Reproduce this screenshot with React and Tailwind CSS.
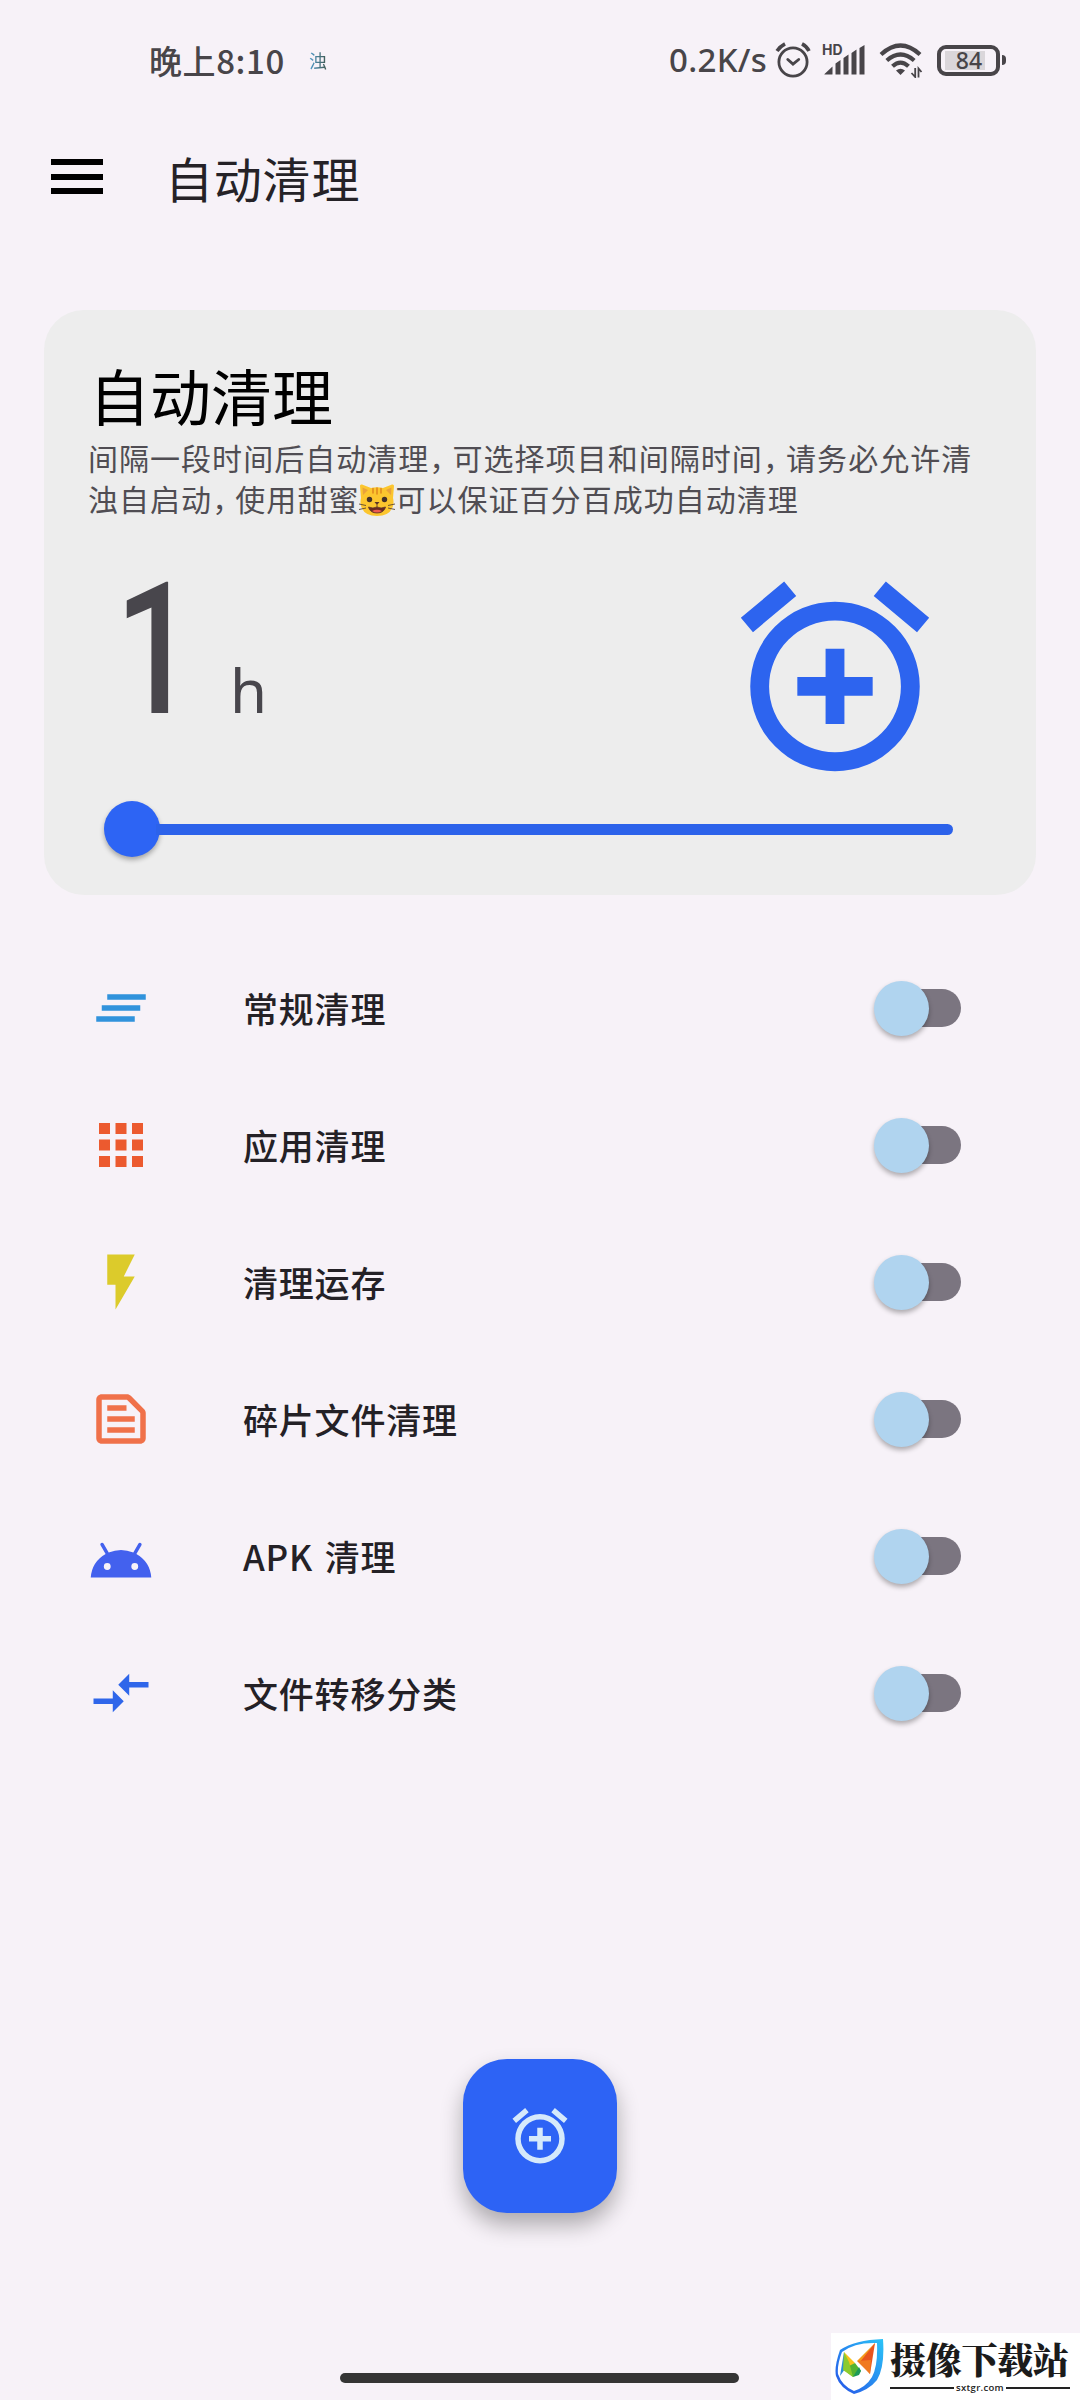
import { useState } from 'react';
import {
  MdAndroid, MdApps, MdClearAll, MdCompareArrows, MdFlashOn, MdOutlineTextSnippet
} from 'react-icons/md';

// 清理项目列表
const items = [
  { name: '常规清理', icon: MdClearAll, color: 'text-[#3193dc]' },
  { name: '应用清理', icon: MdApps, color: 'text-[#ec5a2f]' },
  { name: '清理运存', icon: MdFlashOn, color: 'text-[#dccb2b]' },
  { name: '碎片文件清理', icon: MdOutlineTextSnippet, color: 'text-[#f0714a]' },
  { name: 'APK 清理', icon: MdAndroid, color: 'text-[#4361ee] mt-[10px]' },
  { name: '文件转移分类', icon: MdCompareArrows, color: 'text-[#2f66ea]' }
];

const AlarmAdd = ({ className }) => (
  <svg viewBox="0 0 24 24" fill="currentColor" className={className}>
    <path d="M7.88 3.39 6.6 1.86 2 5.71l1.29 1.53 4.59-3.85zM22 5.72l-4.6-3.86-1.29 1.53 4.6 3.86L22 5.72zM12 4a9 9 0 1 0 0 18 9 9 0 0 0 0-18zm0 16a7 7 0 1 1 0-14 7 7 0 0 1 0 14zm1-11h-2v3H8v2h3v3h2v-3h3v-2h-3V9z" />
  </svg>
);

const CatEmoji = () => (
  <svg viewBox="0 0 36 33" role="img" aria-label="😺" className="inline-block w-9 h-[33px] align-[-6px]">
    <path d="M1 2Q1 0 3 .5L12 4Q18 2.500 24 4L33 .5Q35 0 35 2L34 14Q35 18 34 22Q31 32 18 32T2 22Q1 18 2 14Z" fill="#fcc62e" />
    <path d="M3.500 3.500 9 6 4 11ZM32.500 3.500 27 6 32 11Z" fill="#e9a23b" />
    <path d="M14 4.500V9M18 4V10M22 4.500V9" stroke="#e08a1e" strokeWidth="1.600" strokeLinecap="round" />
    <circle cx="10.500" cy="15.500" r="2.700" fill="#443128" />
    <circle cx="25.500" cy="15.500" r="2.700" fill="#443128" />
    <path d="M15.500 18h5L18 21Z" fill="#5a3428" />
    <path d="M18 20.500V23M9.500 23Q14 25 18 23Q22 25 26.500 23Q25 29 18 29T9.500 23Z" fill="#6b2b20" stroke="#5a3428" strokeWidth=".8" />
    <path d="M13 27Q18 24.500 23 27Q18 30 13 27Z" fill="#ee5a4f" />
    <path d="M0 20 7 21.500M0 25.500 7 24M36 20 29 21.500M36 25.500 29 24" stroke="#5a4632" strokeWidth=".9" />
  </svg>
);

const StatusAlarm = () => (
  <svg viewBox="0 0 36 36" fill="none" stroke="currentColor" className="w-9 h-9">
    <circle cx="18" cy="20" r="14.100" strokeWidth="2.800" />
    <path d="m12.800 17.500 5.200 4.700 5.700-4.700" strokeWidth="2.900" strokeLinecap="round" />
    <path d="M2 9q3-4.600 8-7.200M27 1.800q5 2.600 7 7.200" strokeWidth="3.600" />
  </svg>
);

const Signal = () => (
  <div className="relative w-[42px] h-8">
    <span className="absolute -left-[1px] -top-[1px] text-[14px] leading-[14px] font-bold font-['Inter',sans-serif]">HD</span>
    <svg viewBox="0 0 42 32" fill="currentColor" className="w-full h-full">
      <path d="M1.500 30 9.500 22.500V30Q9.500 30.500 9 30.500H2Q1 30.500 1.500 30ZM12.500 19.500 17.500 16V30.500H12.500ZM20.500 14 25.500 10.500V30.500H20.500ZM28.500 9 33.500 5.500V30.500H28.500ZM36.500 4 41.500 1V30.500H36.500Z" />
    </svg>
  </div>
);

const Wifi = () => (
  <svg viewBox="0 0 44 36" fill="none" stroke="currentColor" className="w-11 h-9">
    <path d="M2 12.500Q21.500-5.500 41 12.500" strokeWidth="4.200" />
    <path d="M7.800 18.500Q21.500 6.500 35.200 18.500M13.500 24.300Q21.500 17 29.500 24.300" strokeWidth="4.200" />
    <path d="M17 28.500Q21.500 25 26 28.500L21.500 33Z" fill="currentColor" stroke="none" />
    <path d="M36.200 26V35L32.500 31M39.500 35.500V26.500L42.500 30" strokeWidth="1.800" />
  </svg>
);

const StatusBar = () => (
  <div className="flex items-center h-[120px] pl-[149px] text-[#484549]">
    <span className="w-[137px] whitespace-nowrap text-[33px] leading-10 tracking-[0.6px] font-medium">晚上8:10</span>
    <span className="ml-[23px] w-[38px] text-[18px] leading-5 bg-gradient-to-r from-[#4d9ccf] to-[#3f5548] to-50% bg-clip-text text-transparent">浊</span>
    <span className="ml-[322px] w-[100px] whitespace-nowrap font-['Noto_Sans',sans-serif] text-[33px] leading-10 tracking-[0.3px] font-medium">0.2K/s</span>
    <div className="ml-[6px]"><StatusAlarm /></div>
    <div className="ml-[12px]"><Signal /></div>
    <div className="ml-[14px]"><Wifi /></div>
    <div className="ml-[14px] flex items-center">
      <div className="w-[63px] h-[31px] rounded-[9px] border-4 border-current flex items-center pl-1">
        <div className="w-10 h-[19px] bg-[#dad6da] text-center font-['Noto_Sans',sans-serif] text-[23px] leading-[19px] font-medium pl-2">84</div>
      </div>
      <div className="ml-[2px] w-1 h-[10px] rounded-r-full bg-current" />
    </div>
  </div>
);

// 半宽标点
const Comma = () => <span className="mr-[7.2px] [font-feature-settings:'halt']">，</span>;

const Card = () => (
  <section className="mx-11 mt-[70px] h-[585px] rounded-[40px] bg-[#ededed] pt-[43px]">
    <h2 className="pl-[45px] text-[61px] leading-[84px] text-black">自动清理</h2>
    <p className="pl-[44px] whitespace-nowrap text-[30px] leading-[41px] tracking-[1.03px] text-[#504d53]">
      间隔一段时间后自动清理<Comma />可选择项目和间隔时间<Comma />请务必允许清<br />
      浊自启动<Comma />使用甜蜜<CatEmoji />可以保证百分百成功自动清理
    </p>
    <div className="flex justify-between pl-[71px] pr-[88px] mt-[45px]">
      <div className="flex items-baseline h-[226px] text-[#48464c] -mt-[22px]">
        <span className="w-[103px] origin-left scale-x-[0.77] font-['Roboto',sans-serif] text-[184px] leading-[216px] font-medium">1</span>
        <span className="ml-[12px] font-['Noto_Sans',sans-serif] text-[60px]">h</span>
      </div>
      <AlarmAdd className="w-[226px] h-[226px] text-[#2d64ef]" />
    </div>
    <div className="flex items-center h-14 mt-[11px] ml-[60px]">
      <div className="w-14 h-14 rounded-full bg-[#2d64f4] shadow-[0_3px_5px_rgba(0,0,0,0.3)]" />
      <div className="-ml-1 w-[797px] h-[11px] rounded-r-full bg-[#2c62ea]" />
    </div>
  </section>
);

const Switch = ({ checked, onChange }) => (
  <button
    role="switch"
    aria-checked={checked}
    onClick={onChange}
    className={`flex items-center w-[87px] h-[55px] mt-px ${checked ? 'justify-end' : 'justify-start'}`}
  >
    <span className="z-10 w-[55px] h-[55px] rounded-full bg-[#b0d4ef] shadow-[0_3px_5px_rgba(0,0,0,0.3)]" />
    <span className="-ml-9 w-[68px] h-[38px] rounded-full bg-[#7b7580]" />
  </button>
);

const App = () => {
  const [enabled, setEnabled] = useState({});

  return (
    <div className="w-[1080px] h-[2400px] bg-[#f7f2f8] overflow-hidden flex flex-col font-['Noto_Sans_CJK_SC',sans-serif]">
      <StatusBar />

      {/* 顶部标题栏 */}
      <header className="flex items-start h-[120px] pl-[51px] pt-[39px]">
        <button className="flex flex-col justify-between w-[52px] h-[35px]">
          <span className="h-[6px] w-full bg-black" />
          <span className="h-[6px] w-full bg-black" />
          <span className="h-[6px] w-full bg-black" />
        </button>
        <h1 className="ml-[62px] -mt-[12px] text-[48px] leading-[60px] tracking-[0.8px] text-[#252227]">自动清理</h1>
      </header>

      <Card />

      {/* 项目开关 */}
      <ul className="mt-[44px]">
        {items.map((item) => (
          <li key={item.name} className="flex items-center h-[137px] pl-[88px] pr-[119px]">
            <item.icon size={66} className={item.color} />
            <span className="ml-[89px] flex-1 text-[35px] leading-[50px] tracking-[0.8px] [word-spacing:3px] font-medium text-[#242126]">{item.name}</span>
            <Switch
              checked={!!enabled[item.name]}
              onChange={() => setEnabled({ ...enabled, [item.name]: !enabled[item.name] })}
            />
          </li>
        ))}
      </ul>

      <button className="mx-auto mt-[298px] w-[154px] h-[154px] shrink-0 rounded-[44px] bg-[#2d63f5] flex items-center justify-center shadow-[0_12px_22px_rgba(0,0,0,0.3)]">
        <AlarmAdd className="w-[66px] h-[66px] text-[#d5e9fb]" />
      </button>

      {/* 底部手势条和水印 */}
      <footer className="mt-auto flex h-[67px]">
        <div className="ml-[340px] mt-[40px] w-[399px] h-[10px] rounded-full bg-[#353535]" />
        <div className="ml-auto w-[249px] h-full bg-white flex pl-[4px]">
          <svg viewBox="0 0 50 58" className="mt-[5px] w-[50px] h-[58px]">
            <defs>
              <linearGradient id="shield" x1="1" y1="0" x2="0" y2="1">
                <stop offset="0" stopColor="#2bc4f7" />
                <stop offset="1" stopColor="#2552e8" />
              </linearGradient>
            </defs>
            <path fillRule="evenodd" d="M48 1Q50 29 42 42Q34 52 19 56Q5 50 1 38Q-1 29 5 12Q20 2 48 1ZM42 5Q20 4 7 14Q2 27 3 36Q7 48 19 53Q31 49 37 39Q43 28 42 5Z" fill="url(#shield)" />
            <path d="M9 14 5 38 10 31Z" fill="#2a8fd8" />
            <path d="M9 14 20 25 12 31Z" fill="#f9c21a" />
            <path d="M20 25 26 33 18 39 8 31Z" fill="#54b330" />
            <path d="M9 14 8 32 18 39 14 24Z" fill="#8ccb2c" />
            <path d="M26 33 24 37 18 39 24 29Z" fill="#1c9a58" />
            <path d="M40 5 22 23 34 23Z" fill="#f59a1b" />
            <path d="M40 5 35 36 25 24Z" fill="#e8541e" />
            <path d="M22 23 36 22 35 36Z" fill="#f07a20" />
          </svg>
          <div className="ml-[5px] w-[180px]">
            <div className="mt-[7px] font-['Noto_Serif_CJK_SC','Noto_Sans_CJK_SC',serif] text-[36px] leading-[37px] tracking-[-0.3px] font-black whitespace-nowrap text-[#1b1b1b]">摄像下载站</div>
            <div className="mt-[5px] flex items-center gap-[2px]">
              <span className="h-[2px] flex-1 bg-[#222]" />
              <span className="font-['Open_Sans',sans-serif] text-[9.500px] leading-3 tracking-[0.3px] font-semibold text-[#222]">sxtgr.com</span>
              <span className="h-[2px] flex-1 bg-[#222]" />
            </div>
          </div>
        </div>
      </footer>
    </div>
  );
};

export default App;
